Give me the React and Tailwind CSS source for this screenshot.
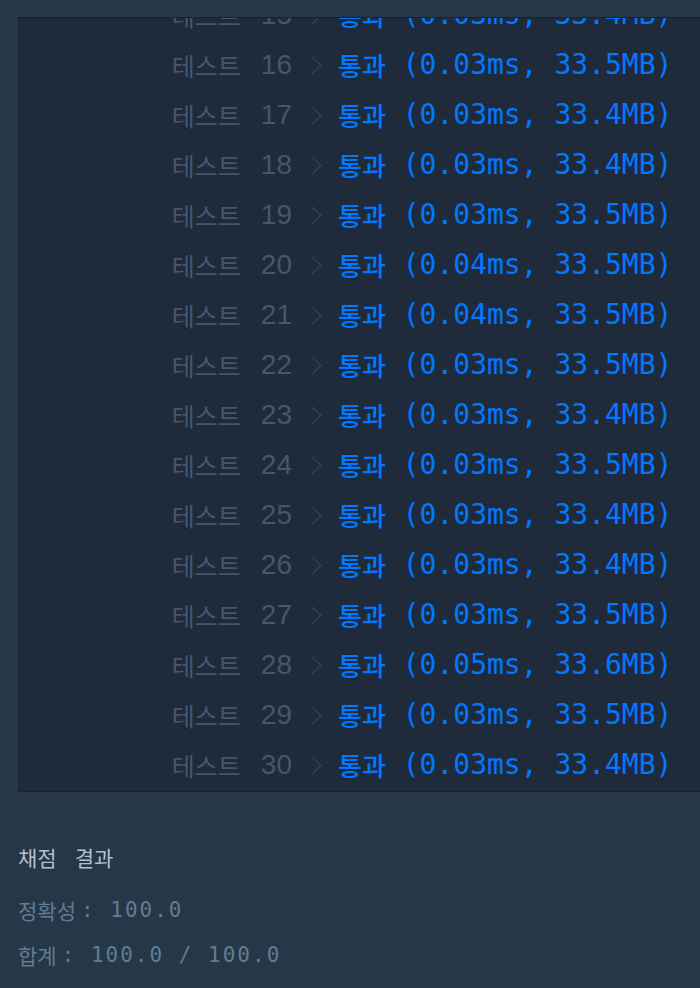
import React from "react";

const ROWS = [
  [15, "0.03", "33.4"],
  [16, "0.03", "33.5"],
  [17, "0.03", "33.4"],
  [18, "0.03", "33.4"],
  [19, "0.03", "33.5"],
  [20, "0.04", "33.5"],
  [21, "0.04", "33.5"],
  [22, "0.03", "33.5"],
  [23, "0.03", "33.4"],
  [24, "0.03", "33.5"],
  [25, "0.03", "33.4"],
  [26, "0.03", "33.4"],
  [27, "0.03", "33.5"],
  [28, "0.05", "33.6"],
  [29, "0.03", "33.5"],
  [30, "0.03", "33.4"],
];

function Chevron() {
  return (
    <svg width="11" height="19" viewBox="0 0 11 19" className="ml-[19px] shrink-0">
      <polyline points="1,1 10,9.5 1,18" fill="none" stroke="#34435a" strokeWidth="1.2" />
    </svg>
  );
}

function TestRow({ n, time, mem }) {
  return (
    <div className="flex h-[50px] shrink-0 items-center">
      <div className="flex w-[273px] items-center justify-end text-[#44576c]">
        <span className="font-['Noto_Sans_CJK_KR',sans-serif] text-[25px] leading-none">테스트</span>
        <span className="ml-[20px] font-['Liberation_Sans',sans-serif] text-[28px] leading-none">{n}</span>
      </div>
      <Chevron />
      <span className="ml-[16px] font-['Noto_Sans_CJK_KR',sans-serif] text-[26px] font-medium leading-none text-[#0078ff]">통과</span>
      <span className="whitespace-pre font-['DejaVu_Sans_Mono',monospace] text-[28px] leading-none text-[#0078ff]">
        {` (${time}ms, ${mem}MB)`}
      </span>
    </div>
  );
}

export default function App() {
  return (
    <div className="h-[988px] w-[700px] overflow-hidden bg-[#263747]">
      {/* test case panel, scrolled to the bottom */}
      <div className="ml-[18px] mt-[17px] flex h-[775px] flex-col justify-end overflow-hidden border border-r-0 border-[#172131] bg-[#1f2a3b] pb-[1px]">
        {ROWS.map(([n, t, m]) => (
          <TestRow key={n} n={n} time={t} mem={m} />
        ))}
      </div>

      {/* grading result */}
      <div className="ml-[18px] pt-[50px]">
        <div className="flex h-[30px] items-center font-['Noto_Sans_CJK_KR',sans-serif] text-[21px] leading-none text-[#b2c0cc]">
          <span>채점</span>
          <span className="ml-[18px]">결과</span>
        </div>
        <div className="mt-[23px] flex h-[30px] items-center text-[#5f7d95]">
          <span className="font-['Noto_Sans_CJK_KR',sans-serif] text-[21px] leading-none">정확성</span>
          <span className="ml-[5px] whitespace-pre font-['DejaVu_Sans_Mono',monospace] text-[21px] leading-none tracking-[2px]">: 100.0</span>
        </div>
        <div className="mt-[15px] flex h-[30px] items-center text-[#5f7d95]">
          <span className="font-['Noto_Sans_CJK_KR',sans-serif] text-[21px] leading-none">합계</span>
          <span className="ml-[5px] whitespace-pre font-['DejaVu_Sans_Mono',monospace] text-[21px] leading-none tracking-[2px]">: 100.0 / 100.0</span>
        </div>
      </div>
    </div>
  );
}
